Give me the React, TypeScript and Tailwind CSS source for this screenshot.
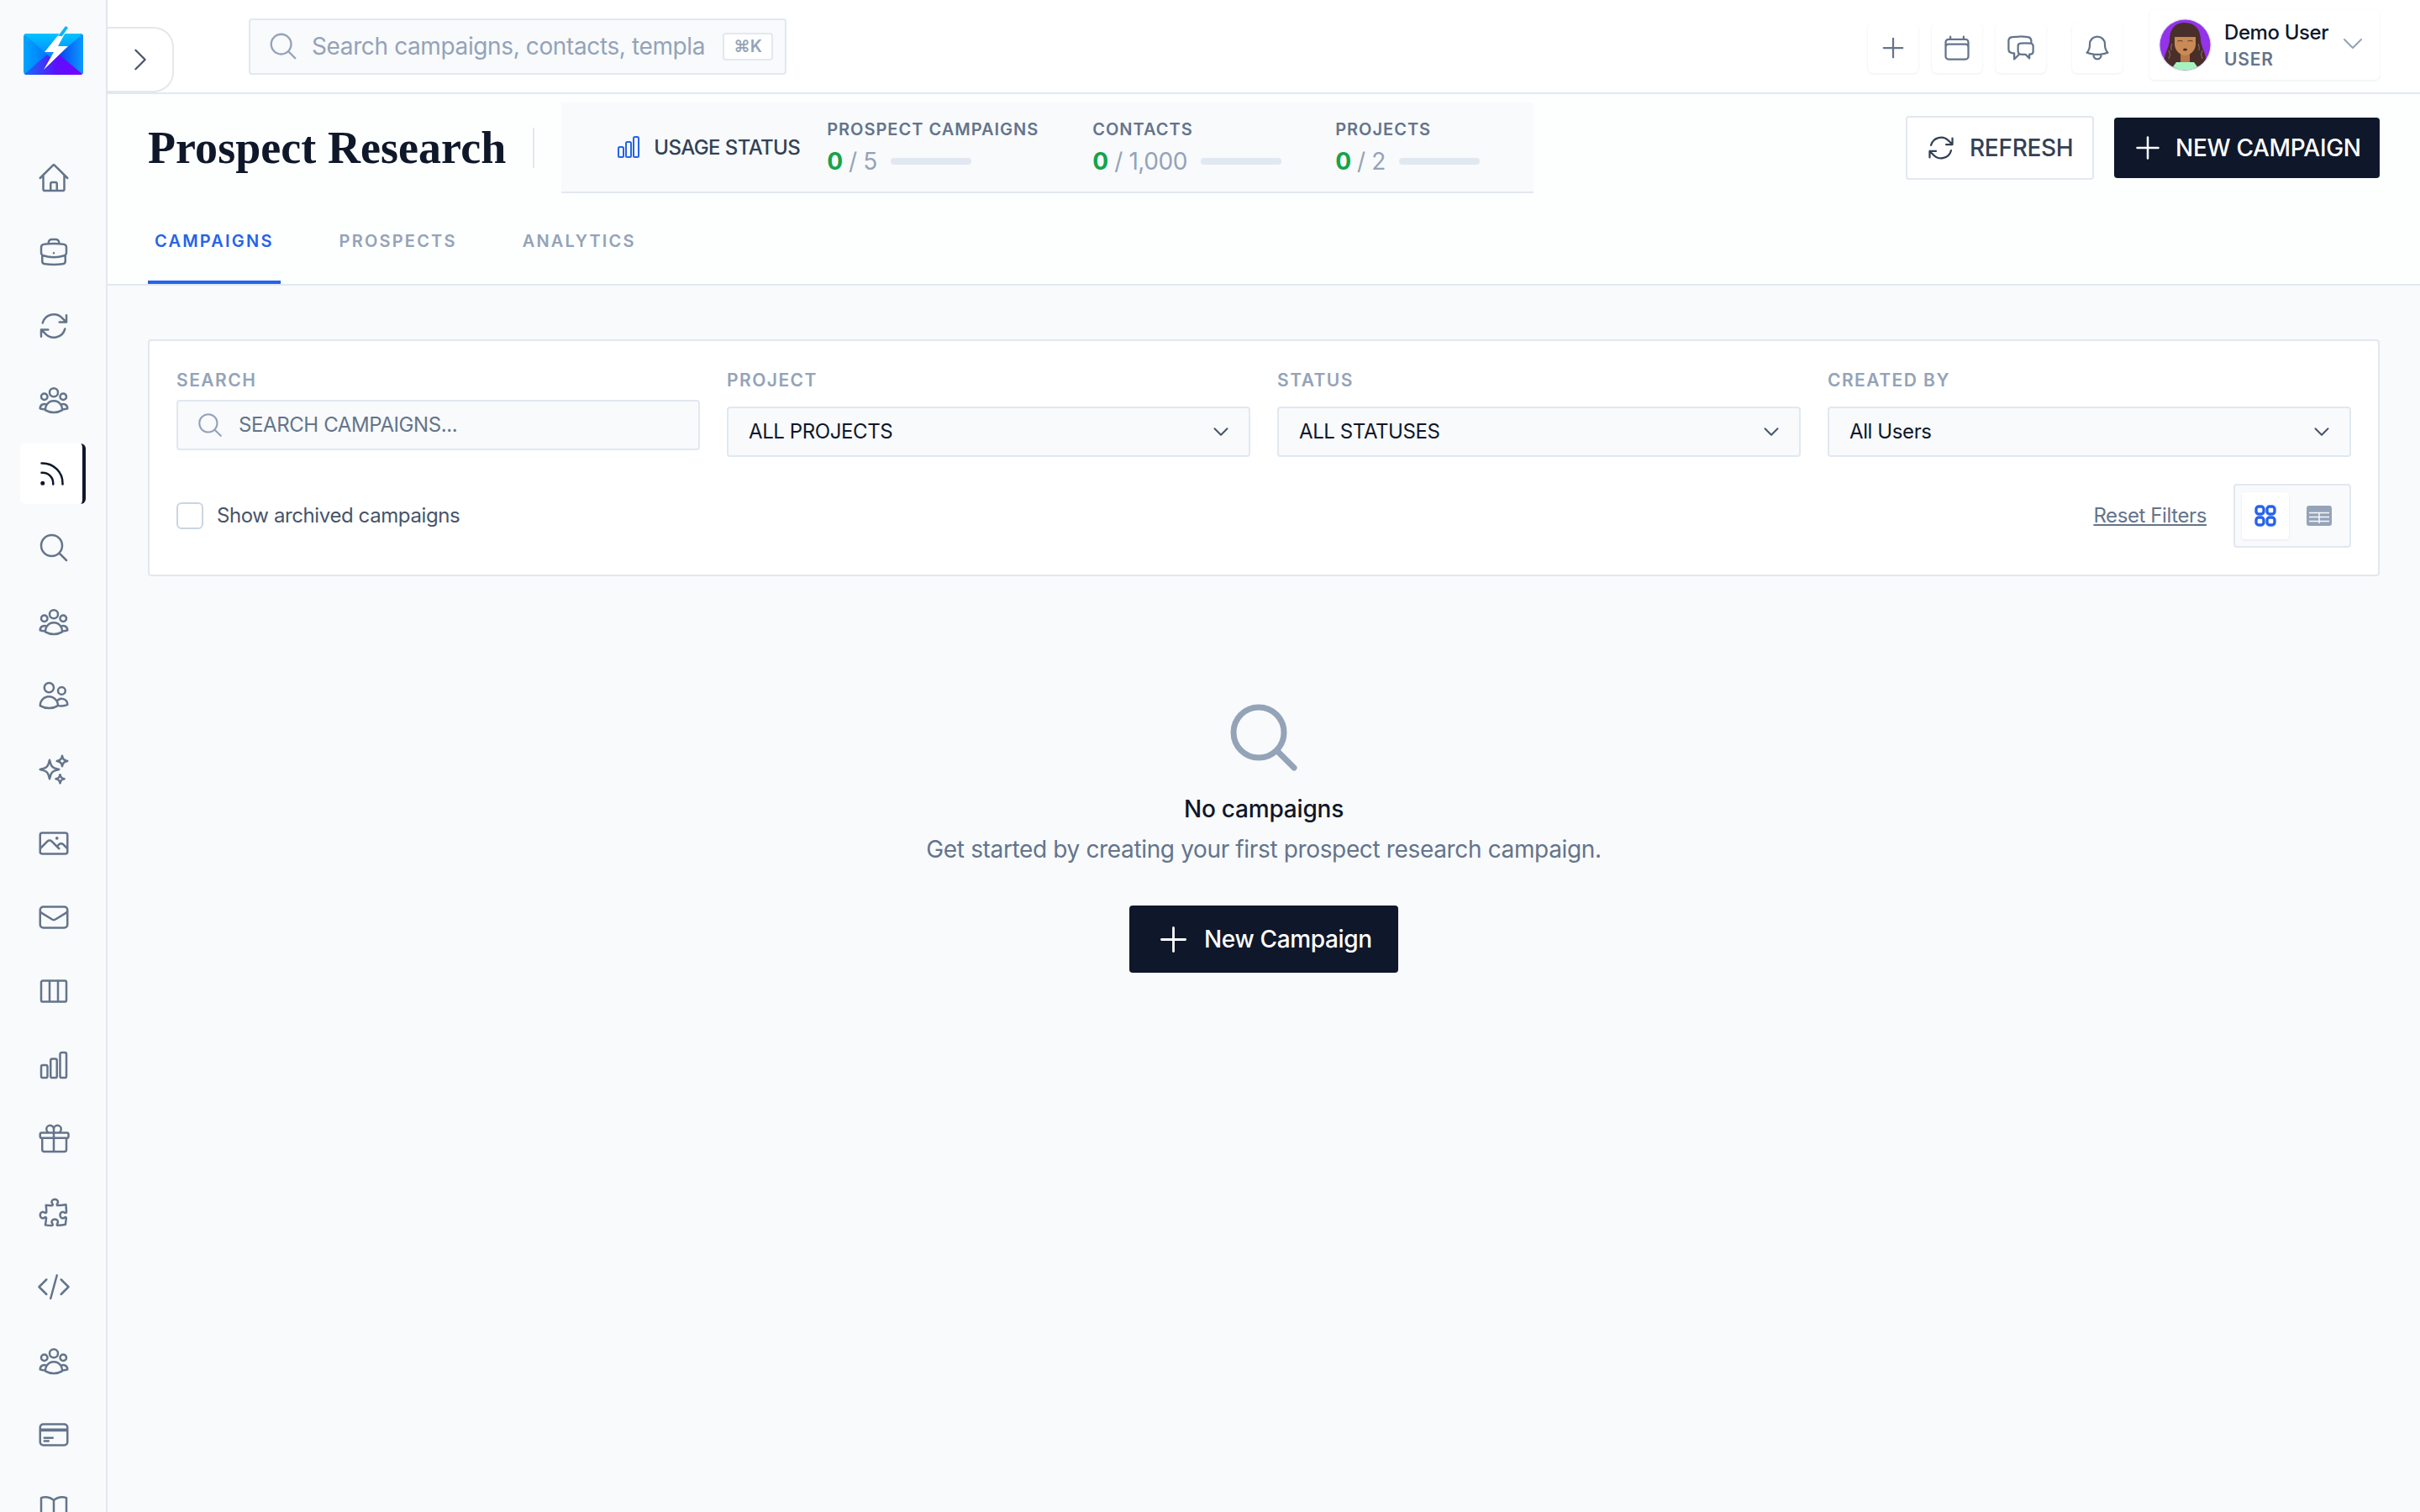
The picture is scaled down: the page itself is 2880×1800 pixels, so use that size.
import {
  HiOutlineArrowPath,
  HiOutlineBell,
  HiOutlineBookOpen,
  HiOutlineBriefcase,
  HiOutlineCalendar,
  HiOutlineChartBar,
  HiOutlineChatBubbleLeftRight,
  HiOutlineChevronDown,
  HiOutlineChevronRight,
  HiOutlineCodeBracket,
  HiOutlineCreditCard,
  HiOutlineEnvelope,
  HiOutlineGift,
  HiOutlineHome,
  HiOutlineMagnifyingGlass,
  HiOutlinePhoto,
  HiOutlinePlus,
  HiOutlinePuzzlePiece,
  HiOutlineRss,
  HiOutlineSparkles,
  HiOutlineSquares2X2,
  HiOutlineUserGroup,
  HiOutlineUsers,
  HiOutlineViewColumns,
} from "react-icons/hi2";

const navItems = [
  HiOutlineHome,
  HiOutlineBriefcase,
  HiOutlineArrowPath,
  HiOutlineUserGroup,
  HiOutlineRss,
  HiOutlineMagnifyingGlass,
  HiOutlineUserGroup,
  HiOutlineUsers,
  HiOutlineSparkles,
  HiOutlinePhoto,
  HiOutlineEnvelope,
  HiOutlineViewColumns,
  HiOutlineChartBar,
  HiOutlineGift,
  HiOutlinePuzzlePiece,
  HiOutlineCodeBracket,
  HiOutlineUserGroup,
  HiOutlineCreditCard,
  HiOutlineBookOpen,
];

export default function App() {
  return (
    <div className="flex h-[1800px] w-[2880px] overflow-hidden bg-[#f8fafc] font-['Inter',sans-serif]">
      <Sidebar />
      <div className="flex min-w-0 flex-1 flex-col">
        <TopBar />
        <PageHeader />
        <main className="px-[48px] pt-[64px]">
          <Filters />
          <EmptyState />
        </main>
      </div>
    </div>
  );
}

function Sidebar() {
  return (
    <aside className="flex h-full w-[128px] shrink-0 flex-col overflow-hidden border-r-2 border-[#e2e8f0] bg-[#f8fafc]">
      <div className="flex h-[176px] shrink-0 justify-center pt-[31px]">
        <Logo />
      </div>
      <nav className="flex shrink-0 flex-col gap-[16px]">
        {navItems.map((Icon, i) =>
          i === 4 ? (
            <div key={i} className="ml-[24px] flex h-[72px] w-[78px] shrink-0 items-center rounded-[6px] border-r-4 border-[#0f172a] bg-white pl-[18px]">
              <Icon className="h-[40px] w-[40px] text-[#0f172a]" />
            </div>
          ) : (
            <div key={i} className="flex h-[72px] shrink-0 items-center justify-center pl-[2px]">
              <Icon className="h-[40px] w-[40px] text-[#64748b]" />
            </div>
          ),
        )}
      </nav>
    </aside>
  );
}

function Logo() {
  return (
    <svg width="71" height="58" viewBox="0 0 71 58" className="shrink-0">
      <defs>
        <linearGradient id="flap" x1="0" y1="0" x2="0" y2="1">
          <stop offset="0" stopColor="#00c4ff" />
          <stop offset="1" stopColor="#0a7cff" />
        </linearGradient>
        <linearGradient id="left" x1="0" y1="0" x2="1" y2="0">
          <stop offset="0" stopColor="#00a6ff" />
          <stop offset="1" stopColor="#0a2cf0" />
        </linearGradient>
        <linearGradient id="right" x1="1" y1="0" x2="0" y2="0">
          <stop offset="0" stopColor="#0a9cff" />
          <stop offset="1" stopColor="#0a2cf0" />
        </linearGradient>
        <linearGradient id="bottom" x1="0" y1="0" x2="1" y2="0">
          <stop offset="0" stopColor="#1272f5" />
          <stop offset="0.55" stopColor="#5a10ff" />
          <stop offset="1" stopColor="#7a00ff" />
        </linearGradient>
        <clipPath id="env">
          <rect x="0" y="9" width="71" height="49" rx="4" />
        </clipPath>
      </defs>
      <g clipPath="url(#env)">
        <rect x="0" y="9" width="71" height="49" fill="url(#left)" />
        <path d="M35 34 71 9V58Z" fill="url(#right)" />
        <path d="M0 58 35 28 71 58Z" fill="url(#bottom)" />
        <path d="M0 9H71L35 40Z" fill="url(#flap)" />
      </g>
      <path d="M50 0 25 31H36L24 52 53 24H41L53 2Z" fill="#ffffff" />
      <path d="M50 0 41 12 46 12 53 2Z" fill="#0bb4ff" />
    </svg>
  );
}

function IconBox({ children, className = "" }: { children: React.ReactNode; className?: string }) {
  return (
    <div className={`mt-[3px] flex h-[60px] w-[60px] items-center justify-center rounded-[6px] bg-white text-[#64748b] shadow-[0_1px_3px_rgba(15,23,42,0.08)] ${className}`}>
      {children}
    </div>
  );
}

function TopBar() {
  return (
    <header className="flex h-[112px] shrink-0 items-center border-b-2 border-[#e2e8f0] bg-white pr-[48px] shadow-[0_2px_4px_rgba(15,23,42,0.03)]">
      <button className="flex h-[78px] w-[79px] shrink-0 items-center justify-center self-end rounded-r-[24px] border-2 border-l-0 border-[#e5e7eb] bg-white text-[#475569]">
        <HiOutlineChevronRight className="h-[36px] w-[36px]" />
      </button>
      <div className="ml-[89px] flex h-[67px] w-[640px] items-center rounded-[4px] border-2 border-[#e2e8f0] bg-[#f8fafc] pr-[14px] pl-[20px]">
        <HiOutlineMagnifyingGlass className="h-[38px] w-[38px] shrink-0 text-[#94a3b8]" />
        <span className="ml-[15px] w-[480px] overflow-hidden text-[28px] leading-[36px] tracking-[-0.38px] whitespace-nowrap text-[#94a3b8]">
          Search campaigns, contacts, templa
        </span>
        <kbd className="ml-auto flex h-[33px] w-[60px] items-center justify-center rounded-[4px] border-2 border-[#e2e8f0] bg-white font-['Inter',sans-serif] text-[20px] font-semibold text-[#94a3b8]">
          ⌘K
        </kbd>
      </div>
      <div className="ml-auto flex items-center">
        <IconBox>
          <HiOutlinePlus className="h-[36px] w-[36px]" />
        </IconBox>
        <IconBox className="ml-[16px]">
          <HiOutlineCalendar className="h-[36px] w-[36px]" />
        </IconBox>
        <IconBox className="ml-[16px]">
          <HiOutlineChatBubbleLeftRight className="h-[36px] w-[36px]" />
        </IconBox>
        <IconBox className="ml-[31px]">
          <HiOutlineBell className="h-[36px] w-[36px]" />
        </IconBox>
        <div className="mb-[3px] ml-[32px] flex h-[83px] w-[274px] items-center rounded-[6px] bg-white pl-[11px] shadow-[0_1px_3px_rgba(15,23,42,0.08)]">
          <Avatar />
          <div className="ml-[15px] flex flex-col">
            <span className="text-[24px] leading-[32px] font-medium tracking-[-0.4px] text-[#0f172a]">Demo User</span>
            <span className="mt-[2px] text-[21px] leading-[28px] font-semibold tracking-[0.04em] text-[#64748b]">USER</span>
          </div>
          <HiOutlineChevronDown className="mt-[-4px] mr-[16px] ml-auto h-[32px] w-[32px] text-[#94a3b8]" />
        </div>
      </div>
    </header>
  );
}

function Avatar() {
  return (
    <svg width="63" height="63" viewBox="0 0 63 63" className="shrink-0">
      <defs>
        <clipPath id="face-clip">
          <circle cx="31.5" cy="31.5" r="30" />
        </clipPath>
      </defs>
      <circle cx="31.5" cy="31.5" r="31.5" fill="#e2e8f0" />
      <g clipPath="url(#face-clip)">
        <rect width="63" height="63" fill="#9333ea" />
        <path d="M31 5C18 5 13 14 13 26 12 36 6 42 7 52 9 60 18 60 24 58L40 58C48 60 56 58 56 50 57 42 51 36 50 26 50 14 44 5 31 5Z" fill="#4a2e2a" />
        <path d="M21 52H42L50 63H13Z" fill="#a7f3c0" />
        <rect x="26" y="38" width="11" height="14" fill="#b9774a" />
        <path d="M19 22H44V31C44 38 37 44 31.5 44 26 44 19 38 19 31Z" fill="#c98a56" />
        <path d="M23 27q2.500 -1.500 5 0M35 27q2.500 -1.500 5 0" stroke="#6b3f2a" strokeWidth="1.2" fill="none" strokeLinecap="round" />
        <ellipse cx="31.500" cy="37" rx="2.500" ry="1.500" fill="#4a2e2a" />
        <path d="M12 38q3 5 0 10M52 38q-3 5 0 10M16 30q-2 4 -1 8M47 30q2 4 1 8" stroke="#a08070" strokeWidth="0.8" fill="none" />
      </g>
    </svg>
  );
}

function Stat({ label, total }: { label: string; total: string }) {
  return (
    <div className="flex flex-col">
      <span className="text-[20px] leading-[28px] font-semibold tracking-[0.05em] text-[#64748b]">{label}</span>
      <div className="mt-[6px] flex items-center">
        <span className="text-[28px] leading-[36px] tracking-[-0.4px] text-[#94a3b8]">
          <span className="font-bold text-[#16a34a]">0</span> / {total}
        </span>
        <div className="ml-[16px] h-[8px] w-[96px] rounded-full bg-[#e2e8f0]" />
      </div>
    </div>
  );
}

function PageHeader() {
  return (
    <section className="shrink-0 border-b-2 border-[#e2e8f0] bg-[#fdfefe] px-[48px]">
      <div className="mt-[10px] flex items-center">
        <h1 className="font-['Liberation_Serif',serif] text-[54px] leading-[64px] font-bold tracking-[0.05px] text-[#0f172a]">Prospect Research</h1>
        <div className="ml-[32px] h-[48px] w-[2px] bg-[#e2e8f0]" />
        <div className="ml-[32px] flex h-[108px] items-center border-b-2 border-[#e2e8f0] bg-[#f8fafc] px-[64px]">
          <HiOutlineChartBar className="h-[32px] w-[32px] shrink-0 text-[#2563eb]" />
          <span className="mt-[2px] mr-[32px] ml-[14px] text-[24px] font-medium tracking-[-0.6px] text-[#334155]">USAGE STATUS</span>
          <div className="flex gap-[64px]">
            <Stat label="PROSPECT CAMPAIGNS" total="5" />
            <Stat label="CONTACTS" total="1,000" />
            <Stat label="PROJECTS" total="2" />
          </div>
        </div>
        <div className="ml-auto flex items-center gap-[24px]">
          <button className="flex h-[76px] w-[224px] items-center gap-[16px] rounded-[4px] border-2 border-[#e2e8f0] bg-white pl-[22px] text-[28px] font-medium tracking-[-0.3px] text-[#334155]">
            <HiOutlineArrowPath className="h-[36px] w-[36px]" />
            REFRESH
          </button>
          <button className="flex h-[72px] w-[316px] items-center gap-[13px] rounded-[4px] bg-[#0f172a] pl-[20px] text-[28px] font-medium tracking-[-0.3px] text-white">
            <HiOutlinePlus className="h-[40px] w-[40px]" />
            NEW CAMPAIGN
          </button>
        </div>
      </div>
      <div className="flex gap-[62px]">
        <Tab label="CAMPAIGNS" active />
        <Tab label="PROSPECTS" />
        <Tab label="ANALYTICS" />
      </div>
    </section>
  );
}

function Tab({ label, active = false }: { label: string; active?: boolean }) {
  return (
    <div className={`flex h-[108px] items-center border-b-4 px-[8px] pt-[9px] text-[20px] font-semibold tracking-[0.11em] ${active ? "border-[#2563eb] text-[#2563eb]" : "border-transparent text-[#94a3b8]"}`}>
      {label}
    </div>
  );
}

function FilterLabel({ children }: { children: React.ReactNode }) {
  return <div className="h-[30px] text-[21px] leading-[30px] font-semibold tracking-[0.07em] text-[#94a3b8]">{children}</div>;
}

function SelectBox({ label, value }: { label: string; value: string }) {
  return (
    <div>
      <FilterLabel>{label}</FilterLabel>
      <div className="mt-[16px] flex h-[60px] items-center justify-between rounded-[4px] border-2 border-[#e2e8f0] bg-[#f8fafc] pr-[21px] pl-[24px] text-[24px] tracking-[-0.4px] text-[#0f172a]">
        {value}
        <HiOutlineChevronDown className="h-[24px] w-[24px] text-[#475569]" strokeWidth={2} />
      </div>
    </div>
  );
}

function TableIcon() {
  return (
    <svg width="30" height="24" viewBox="0 0 30 24" className="ml-[21px] shrink-0">
      <rect width="30" height="24" rx="3" fill="#94a3b8" />
      <path d="M3 8.500H27M3 13.500H27M3 18.500H27M15 8.500V21" stroke="#f8fafc" strokeWidth="1.500" />
    </svg>
  );
}

function Filters() {
  return (
    <div className="rounded-[4px] border-2 border-[#e2e8f0] bg-white p-[32px]">
      <div className="grid grid-cols-4 gap-[32px]">
        <div>
          <FilterLabel>SEARCH</FilterLabel>
          <div className="mt-[8px] flex h-[60px] items-center rounded-[4px] border-2 border-[#e2e8f0] bg-[#f8fafc] pl-[21px]">
            <HiOutlineMagnifyingGlass className="h-[34px] w-[34px] text-[#94a3b8]" />
            <span className="ml-[17px] text-[24px] tracking-[-0.4px] text-[#64748b]">SEARCH CAMPAIGNS...</span>
          </div>
        </div>
        <SelectBox label="PROJECT" value="ALL PROJECTS" />
        <SelectBox label="STATUS" value="ALL STATUSES" />
        <SelectBox label="CREATED BY" value="All Users" />
      </div>
      <div className="mt-[32px] flex items-center">
        <div className="h-[32px] w-[32px] rounded-[6px] border-2 border-[#cbd5e1] bg-white" />
        <span className="ml-[16px] text-[24px] tracking-[-0.4px] text-[#475569]">Show archived campaigns</span>
        <span className="ml-auto text-[24px] tracking-[-0.4px] text-[#64748b] underline">Reset Filters</span>
        <div className="ml-[32px] flex h-[76px] w-[140px] items-center rounded-[4px] border-2 border-[#e2e8f0] bg-[#f8fafc] pl-[8px]">
          <div className="flex h-[56px] w-[56px] items-center justify-center rounded-[4px] bg-white shadow-[0_1px_3px_rgba(15,23,42,0.08)]">
            <HiOutlineSquares2X2 className="h-[32px] w-[32px] text-[#2563eb]" strokeWidth={2.5} />
          </div>
          <TableIcon />
        </div>
      </div>
    </div>
  );
}

function EmptyState() {
  return (
    <div className="mt-[144px] flex flex-col items-center">
      <HiOutlineMagnifyingGlass className="h-[96px] w-[96px] text-[#94a3b8]" strokeWidth={1.75} />
      <div className="mt-[17px] text-[28px] leading-[40px] font-medium tracking-[-0.2px] text-[#0f172a]">No campaigns</div>
      <div className="mt-[8px] text-[28px] leading-[40px] tracking-[-0.355px] text-[#64748b]">Get started by creating your first prospect research campaign.</div>
      <button className="mt-[47px] flex h-[80px] w-[320px] items-center gap-[14px] rounded-[4px] bg-[#0f172a] pl-[30px] text-[28px] font-medium tracking-[-0.35px] text-white">
        <HiOutlinePlus className="h-[45px] w-[45px]" />
        New Campaign
      </button>
    </div>
  );
}
